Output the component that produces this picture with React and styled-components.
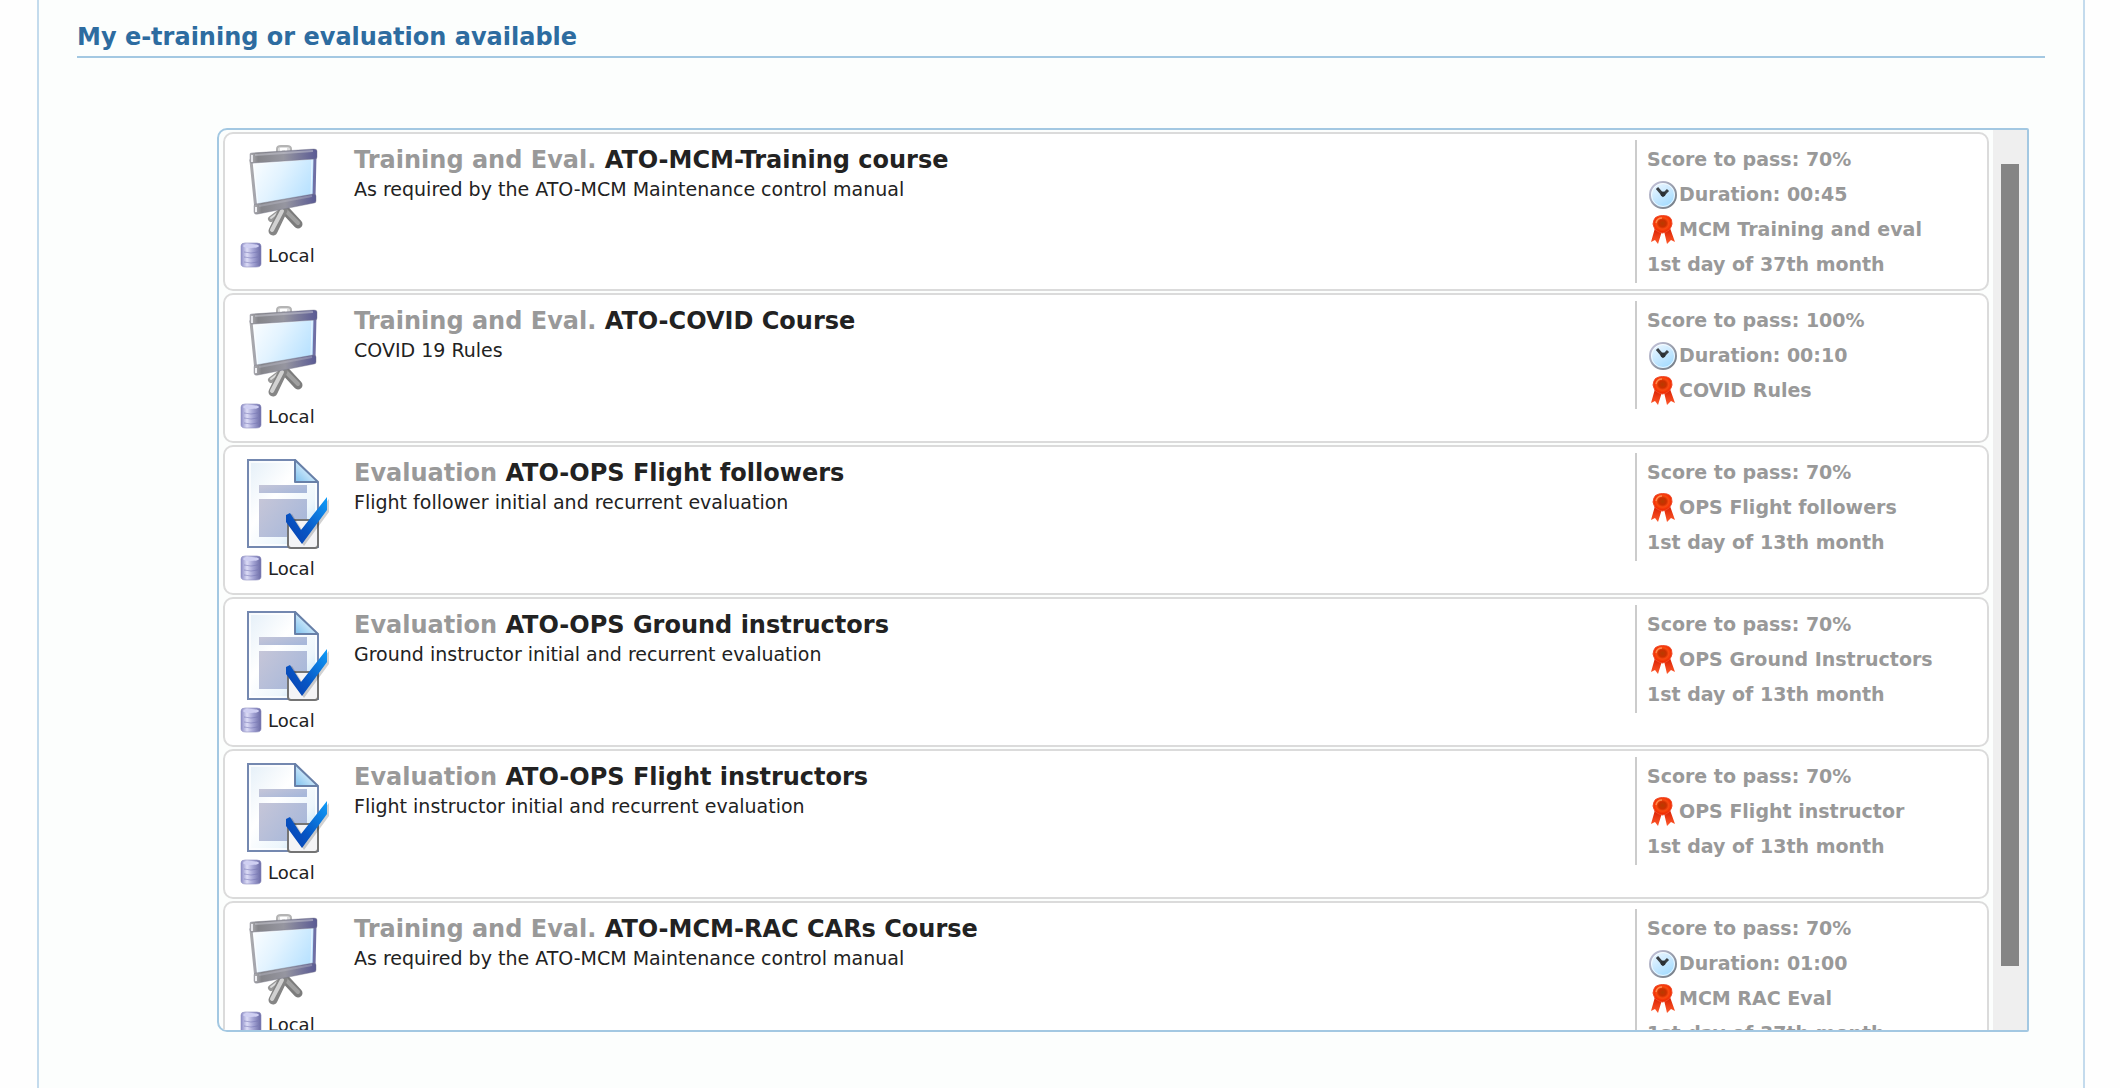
import React from 'react';
import styled, { createGlobalStyle } from 'styled-components';

const palette = {
    title: '#2d6ca0',
    line: '#a3c8e2',
    panelLine: '#c4dbed',
    card: '#dbdbdb',
    gray: '#999999',
    text: '#222222',
};

const GlobalStyle = createGlobalStyle`
    * {
        box-sizing: border-box;
    }
    body {
        margin: 0;
        background: #fefefe;
        color: ${palette.text};
        font-family: 'DejaVu Sans', Verdana, sans-serif;
    }
`;

const Panel = styled.main`
    min-height: 100vh;
    margin: 0 35px 0 37px;
    padding: 23px 38px 56px;
    border-left: 2px solid ${palette.panelLine};
    border-right: 2px solid ${palette.panelLine};
    background: #fcfefd;
`;

const PanelTitle = styled.h2`
    margin: 0 0 70px;
    padding-bottom: 5px;
    border-bottom: 2px solid ${palette.line};
    color: ${palette.title};
    font-size: 24px;
    line-height: 28px;
`;

const ListFrame = styled.div`
    display: flex;
    height: 904px;
    margin: 0 16px 0 140px;
    border: 2px solid ${palette.line};
    border-radius: 10px 2px 2px 10px;
    overflow: hidden;
`;

const CourseList = styled.ul`
    flex: 1;
    min-width: 0;
    display: flex;
    flex-direction: column;
    gap: 2px;
    margin: 0;
    padding: 2px 4px;
    list-style: none;
    overflow: hidden;
`;

const ScrollTrack = styled.div`
    flex: none;
    width: 34px;
    padding: 34px 8px 64px;
    background: #efefef;
`;

const ScrollThumb = styled.div`
    height: 100%;
    background: #858585;
`;

const Card = styled.li`
    flex: none;
    display: flex;
    align-items: flex-start;
    padding: 6px 0;
    border: 2px solid ${palette.card};
    border-radius: 10px;
    background: #ffffff;
`;

const KindColumn = styled.div`
    flex: none;
    width: 129px;
    padding: 2px 0 2px 10px;
    svg {
        display: block;
    }
`;

const Source = styled.div`
    display: flex;
    align-items: center;
    gap: 6px;
    height: 34px;
    padding-left: 5px;
    font-size: 18px;
`;

const Info = styled.div`
    flex: 1;
    min-width: 0;
    padding-top: 4px;
`;

const CourseTitle = styled.h3`
    margin: 0;
    font-size: 24px;
    line-height: 33px;
    span {
        color: ${palette.gray};
    }
`;

const Description = styled.p`
    margin: 0;
    font-size: 19px;
    line-height: 24px;
`;

const Meta = styled.div`
    flex: none;
    width: 352px;
    padding: 1px 0 2px 10px;
    border-left: 2px solid #cccccc;
    color: ${palette.gray};
    font-size: 19px;
    font-weight: 700;
`;

const MetaRow = styled.div`
    display: flex;
    align-items: center;
    height: 35px;
    white-space: nowrap;
`;

const BoardIcon = () => (
    <svg width="96" height="96" viewBox="0 -1 96 96" aria-hidden="true">
        <defs>
            <linearGradient id="boardScreen" x1="0" y1="0" x2="1" y2="0.5">
                <stop offset="0" stopColor="#ffffff" />
                <stop offset="0.5" stopColor="#e2f3ff" />
                <stop offset="1" stopColor="#b9e2ff" />
            </linearGradient>
            <linearGradient id="boardBar" x1="0" y1="0" x2="1" y2="0">
                <stop offset="0" stopColor="#b0b0b4" />
                <stop offset="0.12" stopColor="#85858a" />
                <stop offset="0.5" stopColor="#9696a0" />
                <stop offset="1" stopColor="#5a5a94" />
            </linearGradient>
            <linearGradient id="boardEdge" x1="0" y1="0" x2="1" y2="0">
                <stop offset="0" stopColor="#a9a9ad" />
                <stop offset="1" stopColor="#6f6fa5" />
            </linearGradient>
        </defs>
        <path d="M42 9V6q0-3 4-3h6q4 0 4 3v3" fill="#dedede" stroke="#b4b4b4" strokeWidth="2" />
        <path d="M46 9V6h5v3" fill="none" stroke="#ffffff" strokeWidth="2" />
        <path d="M51 68L63 81" stroke="#7c7c7c" strokeWidth="9" strokeLinecap="round" />
        <path d="M50 67L63 80" stroke="#a0a0a0" strokeWidth="4" strokeLinecap="round" />
        <path d="M44 70L36 76" stroke="#999999" strokeWidth="6" strokeLinecap="round" />
        <path d="M44 69L36 75" stroke="#dadada" strokeWidth="2" strokeLinecap="round" />
        <path d="M48 67L38 88" stroke="#858585" strokeWidth="9" strokeLinecap="round" />
        <path d="M47 68L37 87" stroke="#d2d2d2" strokeWidth="4" strokeLinecap="round" />
        <path d="M16 18L80 13L79 56L21 67z" fill="url(#boardScreen)" stroke="url(#boardEdge)" strokeWidth="3" />
        <path d="M19 21L77 16L76 53L23 63z" fill="none" stroke="#ffffff" strokeOpacity="0.6" strokeWidth="1" />
        <path d="M15 11q0-1 2-1L79 6q3 0 3 2v6q0 2-2 2L19 20q-4 1-4-2z" fill="url(#boardBar)" stroke="#77778a" strokeOpacity="0.4" />
        <path d="M20 12L78 8" stroke="#c9c9d4" strokeOpacity="0.5" strokeWidth="2" />
        <path d="M17 12v7" stroke="#e6e6ec" strokeWidth="2" />
        <path d="M19 63q0-2 2-2L78 51q3 0 3 2v5q0 2-2 2L23 71q-4 1-4-2z" fill="url(#boardBar)" stroke="#77778a" strokeOpacity="0.4" />
        <path d="M24 63L77 53" stroke="#bcbcc8" strokeOpacity="0.4" strokeWidth="2" />
        <path d="M21 64v5" stroke="#f0f0f4" strokeWidth="2" />
    </svg>
);

const SheetIcon = () => (
    <svg width="96" height="96" viewBox="0 0 96 96" aria-hidden="true">
        <defs>
            <linearGradient id="sheetPage" x1="0" y1="0" x2="1" y2="1">
                <stop offset="0" stopColor="#e4eff8" />
                <stop offset="0.4" stopColor="#ffffff" />
                <stop offset="0.7" stopColor="#edf6fc" />
                <stop offset="1" stopColor="#a9d3ef" />
            </linearGradient>
            <linearGradient id="sheetFold" x1="0" y1="1" x2="0.8" y2="0.2">
                <stop offset="0" stopColor="#7cc0ee" />
                <stop offset="1" stopColor="#f4fbff" />
            </linearGradient>
            <linearGradient id="sheetBlock" x1="0" y1="0" x2="1" y2="0.6">
                <stop offset="0" stopColor="#c6c6d8" />
                <stop offset="1" stopColor="#a8b8da" />
            </linearGradient>
            <linearGradient id="sheetTick" x1="0" y1="1" x2="1" y2="0">
                <stop offset="0" stopColor="#0a3fae" />
                <stop offset="0.4" stopColor="#0755c4" />
                <stop offset="1" stopColor="#109cf8" />
            </linearGradient>
        </defs>
        <path d="M13 5H60L83 28V92H13z" fill="url(#sheetPage)" stroke="#7488b0" strokeWidth="2" />
        <path d="M15 7H58V28H81V90H15z" fill="none" stroke="#ffffff" strokeOpacity="0.7" strokeWidth="2" />
        <path d="M60 5V27H83z" fill="url(#sheetFold)" stroke="#6880a8" strokeWidth="2" strokeLinejoin="round" />
        <rect x="24" y="30" width="48" height="8" fill="url(#sheetBlock)" />
        <rect x="24" y="44" width="48" height="38" fill="url(#sheetBlock)" />
        <rect x="53" y="65" width="30" height="28" rx="3" fill="#f4f4f6" stroke="#747474" strokeWidth="2" />
        <path d="M53 61L57 59L67 75L94 44V57L69 91L52 66z" fill="#000000" fillOpacity="0.18" />
        <path d="M51 60L55 58L66 75L92 42V55L67 89L51 67z" fill="url(#sheetTick)" />
    </svg>
);

const DatabaseIcon = () => (
    <svg width="22" height="26" viewBox="0 0 22 26" aria-hidden="true">
        <defs>
            <linearGradient id="dbBody" x1="0" y1="0" x2="1" y2="0">
                <stop offset="0" stopColor="#8c8cc6" />
                <stop offset="0.3" stopColor="#dcdcf6" />
                <stop offset="0.6" stopColor="#a6a6d6" />
                <stop offset="1" stopColor="#6a6aa4" />
            </linearGradient>
        </defs>
        <path d="M1 4Q1 1 5 1H17Q21 1 21 4V22Q21 25 16 25H6Q1 25 1 22z" fill="url(#dbBody)" stroke="#8e8ec0" strokeOpacity="0.6" />
        <ellipse cx="11" cy="4" rx="8" ry="2" fill="#cfcff2" />
        <path d="M4 10Q11 12 18 10M4 15Q11 17 18 15M4 20Q11 22 18 20" fill="none" stroke="#7474b2" strokeOpacity="0.5" strokeWidth="1" />
    </svg>
);

const ClockIcon = () => (
    <svg width="32" height="32" viewBox="0 -1 32 32" aria-hidden="true">
        <defs>
            <linearGradient id="clockFace" x1="0" y1="0" x2="0.6" y2="1">
                <stop offset="0" stopColor="#f4fbff" />
                <stop offset="0.5" stopColor="#cdeaff" />
                <stop offset="1" stopColor="#a4dcff" />
            </linearGradient>
            <linearGradient id="clockRim" x1="0" y1="0" x2="1" y2="1">
                <stop offset="0" stopColor="#c8c8e0" />
                <stop offset="0.5" stopColor="#9a9eac" />
                <stop offset="1" stopColor="#70787f" />
            </linearGradient>
        </defs>
        <circle cx="16" cy="16" r="13" fill="url(#clockFace)" stroke="url(#clockRim)" strokeWidth="2" />
        <circle cx="16" cy="16" r="11.5" fill="none" stroke="#ffffff" strokeOpacity="0.7" />
        <path d="M10 9L16 16L21 11" fill="none" stroke="#3a4045" strokeWidth="3" />
        <circle cx="16" cy="15" r="2.5" fill="#2b3034" />
    </svg>
);

const AwardIcon = () => (
    <svg width="32" height="32" viewBox="0 0 32 32" aria-hidden="true">
        <defs>
            <radialGradient id="awardSeal" cx="0.5" cy="0.45" r="0.5">
                <stop offset="0" stopColor="#b83c00" />
                <stop offset="0.4" stopColor="#cc3000" />
                <stop offset="0.65" stopColor="#fa4a10" />
                <stop offset="1" stopColor="#f02800" />
            </radialGradient>
            <linearGradient id="awardTail" x1="0" y1="0" x2="0" y2="1">
                <stop offset="0" stopColor="#d81e00" />
                <stop offset="1" stopColor="#ff5a2c" />
            </linearGradient>
        </defs>
        <path d="M8 15L4 29L8 27L11 31L15 18z" fill="url(#awardTail)" />
        <path d="M23 15L28 29L24 27L20 31L17 18z" fill="url(#awardTail)" />
        <path d="M15.500 2.500L20 3L23 4.500L24.500 7L25 11L24 14L22 17L19 19L15.500 20L12 19L8.500 17L7 14L6 11L7 7L8.500 4.500L12 3z" fill="url(#awardSeal)" stroke="#f04a28" strokeWidth="1" strokeLinejoin="round" />
        <path d="M9 10Q10 5 15 5" fill="none" stroke="#ff8a50" strokeWidth="1.500" />
    </svg>
);

const courses = [
    {
        training: true,
        title: 'ATO-MCM-Training course',
        description: 'As required by the ATO-MCM Maintenance control manual',
        score: '70%',
        duration: '00:45',
        award: 'MCM Training and eval',
        recurrence: '1st day of 37th month',
    },
    {
        training: true,
        title: 'ATO-COVID Course',
        description: 'COVID 19 Rules',
        score: '100%',
        duration: '00:10',
        award: 'COVID Rules',
    },
    {
        title: 'ATO-OPS Flight followers',
        description: 'Flight follower initial and recurrent evaluation',
        score: '70%',
        award: 'OPS Flight followers',
        recurrence: '1st day of 13th month',
    },
    {
        title: 'ATO-OPS Ground instructors',
        description: 'Ground instructor initial and recurrent evaluation',
        score: '70%',
        award: 'OPS Ground Instructors',
        recurrence: '1st day of 13th month',
    },
    {
        title: 'ATO-OPS Flight instructors',
        description: 'Flight instructor initial and recurrent evaluation',
        score: '70%',
        award: 'OPS Flight instructor',
        recurrence: '1st day of 13th month',
    },
    {
        training: true,
        title: 'ATO-MCM-RAC CARs Course',
        description: 'As required by the ATO-MCM Maintenance control manual',
        score: '70%',
        duration: '01:00',
        award: 'MCM RAC Eval',
        recurrence: '1st day of 37th month',
    },
];

const CourseCard = ({ course }) => (
    <Card>
        <KindColumn>
            {course.training ? <BoardIcon /> : <SheetIcon />}
            <Source>
                <DatabaseIcon />
                Local
            </Source>
        </KindColumn>
        <Info>
            <CourseTitle>
                <span>{course.training ? 'Training and Eval.' : 'Evaluation'}</span> {course.title}
            </CourseTitle>
            <Description>{course.description}</Description>
        </Info>
        <Meta>
            <MetaRow>Score to pass: {course.score}</MetaRow>
            {course.duration && (
                <MetaRow>
                    <ClockIcon />
                    Duration: {course.duration}
                </MetaRow>
            )}
            <MetaRow>
                <AwardIcon />
                {course.award}
            </MetaRow>
            {course.recurrence && <MetaRow>{course.recurrence}</MetaRow>}
        </Meta>
    </Card>
);

const App = () => {
    return (
        <>
            <GlobalStyle />
            <Panel>
                <PanelTitle>My e-training or evaluation available</PanelTitle>
                <ListFrame>
                    <CourseList>
                        {courses.map((course) => (
                            <CourseCard key={course.title} course={course} />
                        ))}
                    </CourseList>
                    <ScrollTrack>
                        <ScrollThumb />
                    </ScrollTrack>
                </ListFrame>
            </Panel>
        </>
    );
};

export default App;
